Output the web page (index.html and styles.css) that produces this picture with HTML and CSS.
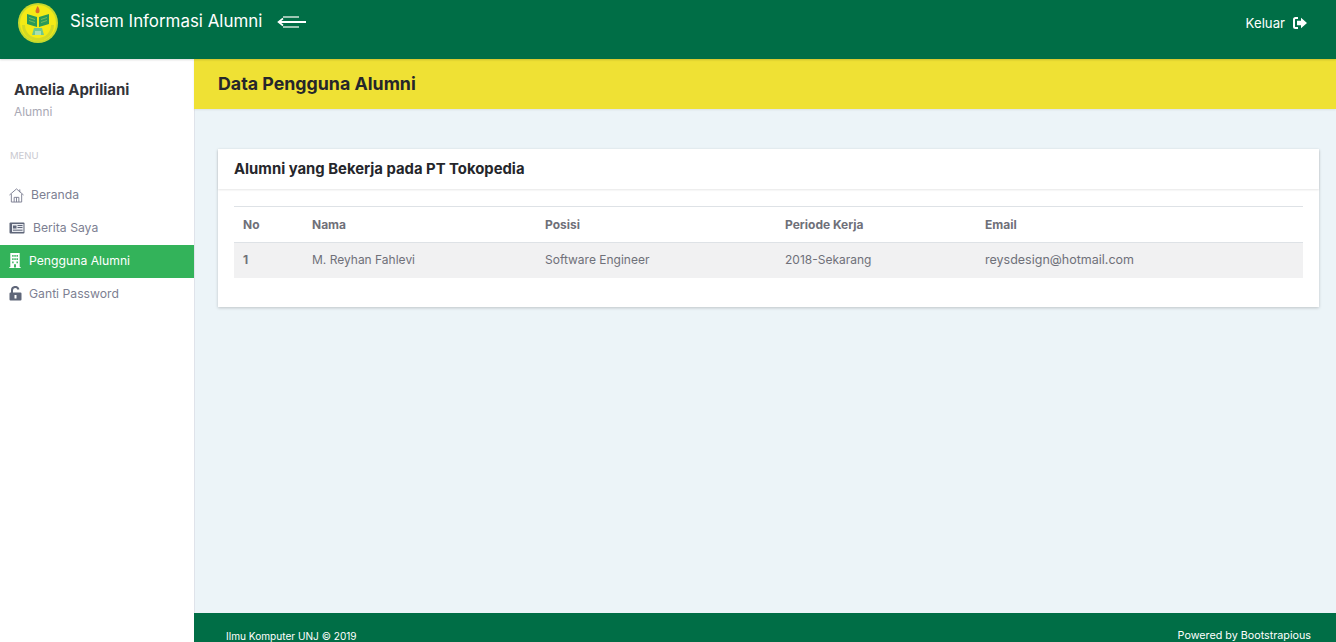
FILE: index.html
```html
<!DOCTYPE html>
<html lang="en">
<head>
  <meta charset="UTF-8">
  <meta name="viewport" content="width=device-width, initial-scale=1.0">
  <title>Sistem Informasi Alumni</title>
  <link rel="stylesheet" href="styles.css">
</head>
<body>
  <header class="topbar">
    <div class="brand">
      <svg class="logo" viewBox="0 0 40 40" width="40" height="40">
        <circle cx="20" cy="20" r="20" fill="#c6d92e"/>
        <circle cx="20" cy="20" r="18" fill="#f4ea16"/>
        <path d="M4 22a16 16 0 0 0 32 0h-3a13 13 0 0 1-26 0z" fill="#d3d924"/>
        <path d="M19.500 3c2 2.500 2.500 4.500 1.700 6.500-.5 1-2.900 1-3.400 0-.8-2 .4-3.500 1.700-6.500z" fill="#d9702a"/>
        <path d="M9 11l10 3v10l-10-3zM31 11l-10 3v10l10-3z" fill="#2a9a58"/>
        <path d="M11 14.500l6 2M11 17.500l6 2M29 14.500l-6 2M29 17.500l-6 2" stroke="#8cc65a" stroke-width=".8"/>
        <path d="M14 32l2-7h8l2 7z" fill="#6fc88e"/>
        <path d="M17 32v-4h6v4z" fill="#a9dfae"/>
      </svg>
      <span class="brand-name">Sistem Informasi Alumni</span>
      <svg class="toggle" viewBox="0 0 30 14" width="30" height="14">
        <path d="M6 2h16M6 12h16" stroke="#cfe3d8" stroke-width="1.500" fill="none"/>
        <path d="M2 7h27" stroke="#fff" stroke-width="2" fill="none"/>
        <path d="M6 3.500L1.500 7 6 10.500" stroke="#fff" stroke-width="1.600" fill="none"/>
      </svg>
    </div>
    <a class="logout" href="#">
      Keluar
      <svg viewBox="0 0 14 12" width="14" height="12">
        <path d="M5 1H2.500A1.500 1.500 0 0 0 1 2.500v7A1.500 1.500 0 0 0 2.500 11H5" stroke="#fff" stroke-width="2" fill="none"/>
        <path d="M8 .8L14 6l-6 5.200V8.300H4V3.700h4z" fill="#fff"/>
      </svg>
    </a>
  </header>

  <div class="layout">
    <aside class="sidebar">
      <div class="profile">
        <h4>Amelia Apriliani</h4>
        <p>Alumni</p>
      </div>
      <div class="menu-title">MENU</div>
      <ul class="menu">
        <li class="menu-item">
          <svg viewBox="0 0 16 16" width="15" height="16">
            <path d="M.5 8L8 1.500 15.500 8M2.500 7v8.500h11V7M11.500 2v3M5.500 15.500v-5h5v5M8 10.500v5" stroke="#7d7f92" stroke-width="1" fill="none"/>
          </svg>
          <a href="#">Beranda</a>
        </li>
        <li class="menu-item menu-news">
          <svg viewBox="0 0 16 12" width="16" height="12">
            <rect x=".5" y=".5" width="15" height="11" rx="1" fill="#5f6679"/>
            <rect x="3" y="2" width="11.500" height="8" fill="#e9ebf0"/>
            <path d="M4 3.500h3.500v3H4z" fill="#5f6679"/>
            <path d="M8.500 3.500h5M8.500 5.500h5M4 8.200h9.500" stroke="#5f6679" stroke-width="1"/>
          </svg>
          <a href="#">Berita Saya</a>
        </li>
        <li class="menu-item menu-building active">
          <svg viewBox="0 0 12 16" width="12" height="15">
            <path d="M1 0h10v15h1v1H0v-1h1z" fill="#fff"/>
            <path d="M3 2h1.500v2H3zM5.300 2h1.500v2H5.300zM7.600 2h1.500v2H7.600zM3 5.500h1.500v2H3zM5.300 5.500h1.500v2H5.300zM7.600 5.500h1.500v2H7.600zM3 9h1.500v2H3zM7.600 9h1.500v2H7.600zM5 12h2v3.500H5z" fill="#33b35a"/>
          </svg>
          <a href="#">Pengguna Alumni</a>
        </li>
        <li class="menu-item">
          <svg viewBox="0 0 13 15" width="13" height="15">
            <path d="M3 7V4.500a3.300 3.300 0 0 1 6.500-1" stroke="#5f6679" stroke-width="2" fill="none"/>
            <path d="M1.500 6.500h10A1 1 0 0 1 12.500 7.500v6a1 1 0 0 1-1 1h-10a1 1 0 0 1-1-1v-6a1 1 0 0 1 1-1z" fill="#5f6679"/>
            <rect x="5.500" y="9" width="2" height="3.500" fill="#fff"/>
          </svg>
          <a href="#">Ganti Password</a>
        </li>
      </ul>
    </aside>

    <main class="main">
      <div class="page-title">
        <h3>Data Pengguna Alumni</h3>
      </div>
      <div class="content">
        <div class="card">
          <div class="card-header">
            <h5>Alumni yang Bekerja pada PT Tokopedia</h5>
          </div>
          <div class="card-body">
            <table class="table">
              <thead>
                <tr>
                  <th class="col-no">No</th>
                  <th class="col-name">Nama</th>
                  <th class="col-pos">Posisi</th>
                  <th class="col-period">Periode Kerja</th>
                  <th>Email</th>
                </tr>
              </thead>
              <tbody>
                <tr>
                  <th>1</th>
                  <td>M. Reyhan Fahlevi</td>
                  <td>Software Engineer</td>
                  <td>2018-Sekarang</td>
                  <td class="cell-email">reysdesign@hotmail.com</td>
                </tr>
              </tbody>
            </table>
          </div>
        </div>
      </div>
      <footer class="footer">
        <span class="footer-left">Ilmu Komputer UNJ © 2019</span>
        <span>Powered by Bootstrapious</span>
      </footer>
    </main>
  </div>
</body>
</html>
```

FILE: styles.css
```css
/* Basic styling */
html, body {
  height: 642px;
  overflow: hidden;
}
body {
  margin: 0;
  font-family: Inter, "Open Sans", sans-serif;
  font-size: 12px;
  color: #6f7079;
  background-color: #ecf4f8;
}
a {
  color: inherit;
  text-decoration: none;
}

/* Top bar */
.topbar {
  height: 59px;
  background-color: #006e46;
  display: flex;
  justify-content: space-between;
  align-items: flex-start;
  padding: 0 29px 0 18px;
  box-shadow: 0 1px 2px rgba(0, 0, 0, 0.15);
  position: relative;
}
.brand {
  display: flex;
  align-items: center;
  height: 46px;
}
.logo {
  margin-right: 12px;
}
.brand-name {
  color: #fff;
  font-size: 16.900px;
  margin: 0 15px 4px 0;
}
.toggle {
  margin-bottom: 2px;
}
.logout {
  display: flex;
  align-items: center;
  gap: 8px;
  height: 46px;
  color: #fff;
  font-size: 13.200px;
}

/* Sidebar */
.layout {
  display: flex;
  height: 583px;
}
.sidebar {
  width: 195px;
  margin-right: -1px;
  flex-shrink: 0;
  background-color: #fff;
  border-right: 1px solid #dfe3ea;
  box-sizing: border-box;
}
.profile {
  padding: 22px 14px 0;
}
.profile h4 {
  margin: 0;
  font-size: 15px;
  font-weight: 700;
  line-height: 18px;
  color: #33343a;
}
.profile p {
  margin: 5px 0 0;
  font-size: 11.900px;
  line-height: 16px;
  color: #a9a9b5;
}
.menu-title {
  margin: 30px 0 0 10px;
  font-size: 9.500px;
  line-height: 12px;
  color: #c9c9d0;
}
.menu {
  list-style: none;
  margin: 17px 0 0;
  padding: 0;
}
.menu-item {
  height: 33px;
  box-sizing: border-box;
  padding: 0 0 2px 9px;
  display: flex;
  align-items: center;
  gap: 7px;
  color: #7d7f92;
  font-size: 12.200px;
}
.menu-news {
  gap: 8px;
}
.menu-building {
  gap: 8px;
}
.menu-item.active {
  background-color: #33b35a;
  color: #fff;
}

/* Main area */
.main {
  flex: 1;
  display: flex;
  flex-direction: column;
  min-width: 0;
}
.page-title {
  height: 50px;
  background-color: #efe134;
  box-sizing: border-box;
  padding: 0 24px 2px;
  display: flex;
  align-items: center;
  box-shadow: 0 1px 2px rgba(0, 0, 0, 0.08);
}
.page-title h3 {
  margin: 0;
  font-size: 17.800px;
  font-weight: 700;
  color: #25262b;
}
.content {
  flex: 1;
  padding: 40px 17px 0 24px;
}
.card {
  background-color: #fff;
  box-shadow: 0 1px 3px rgba(0, 0, 0, 0.2);
  height: 158px;
}
.card-header {
  height: 40px;
  box-sizing: border-box;
  padding: 0 16px 1px;
  display: flex;
  align-items: center;
  box-shadow: 0 1px 2px rgba(0, 0, 0, 0.1);
}
.card-header h5 {
  margin: 0;
  font-size: 14.850px;
  font-weight: 700;
  color: #25262b;
}
.card-body {
  padding: 17px 16px 0;
}

/* Table */
.table {
  width: 100%;
  border-collapse: collapse;
  font-size: 12px;
  table-layout: fixed;
}
.table th,
.table td {
  text-align: left;
  padding: 0 9px;
  font-weight: 400;
}
.table th {
  font-weight: 700;
}
.table thead tr {
  height: 36px;
  border-top: 1px solid #dee2e6;
  border-bottom: 1px solid #dee2e6;
}
.table thead th {
  padding-bottom: 1px;
}
.table tbody tr {
  height: 35px;
  background-color: #f1f1f2;
}
.table tbody th,
.table tbody td {
  padding-bottom: 2px;
}
.col-no { width: 51px; }
.col-name { width: 215px; }
.col-pos { width: 222px; }
.col-period { width: 182px; }
.cell-email {
  font-size: 12.500px;
}

/* Footer */
.footer {
  height: 29px;
  flex-shrink: 0;
  box-sizing: border-box;
  background-color: #006e46;
  color: #fff;
  font-size: 10.750px;
  display: flex;
  justify-content: space-between;
  padding: 17px 25px 0 32px;
  line-height: 12px;
}
.footer-left {
  font-size: 10.100px;
}
```
